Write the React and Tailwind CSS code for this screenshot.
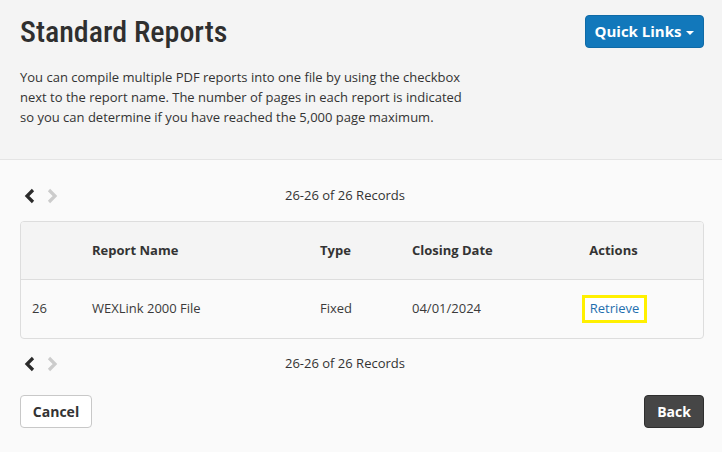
import React from 'react';

const Chevron = ({ dir, className }) => (
  <svg width="14" height="16" viewBox="0 0 14 16" className={className}>
    {dir === 'left' ? (
      <path d="M10 2 L4 8 L10 14" fill="none" stroke="currentColor" strokeWidth="3.2" strokeLinejoin="miter" />
    ) : (
      <path d="M4 2 L10 8 L4 14" fill="none" stroke="currentColor" strokeWidth="3.2" strokeLinejoin="miter" />
    )}
  </svg>
);

const Pager = () => (
  <div className="flex items-center h-[24px] text-[13px] text-[#333]">
    <div className="flex items-center gap-[8px] pl-[3px] w-[200px]">
      <Chevron dir="left" className="text-[#2b2b2b]" />
      <Chevron dir="right" className="text-[#cccccc]" />
    </div>
    <div className="ml-[65px]">26-26 of 26 Records</div>
  </div>
);

const App = () => {
  return (
    <div
      className="w-[722px] h-[452px] bg-[#fafafa] text-[#333]"
      style={{ fontFamily: '"Open Sans", sans-serif' }}
    >
      {/* Header */}
      <div className="bg-[#f4f4f4] border-b border-[#e4e4e4] h-[160px] pl-[20px] pr-[18px] pt-[14px]">
        <div className="flex items-start justify-between">
          <h1
            className="text-[30px] leading-[36px] font-medium text-[#2f2f2f]"
            style={{ fontFamily: '"Roboto Condensed", "Liberation Sans Narrow", "DejaVu Sans Condensed", Roboto, sans-serif' }}
          >
            Standard Reports
          </h1>
          <button className="mt-[1px] h-[33px] w-[119px] bg-[#1278bb] rounded-[4px] text-white text-[15px] font-bold flex items-center justify-center gap-[5px] border border-[#0f6aa6]">
            Quick Links
            <span className="inline-block w-0 h-0 border-l-[4px] border-r-[4px] border-t-[4px] border-l-transparent border-r-transparent border-t-white mt-[2px]" />
          </button>
        </div>
        <p className="mt-[17px] text-[13px] leading-[20px] text-[#333] w-[448px]">
          You can compile multiple PDF reports into one file by using the checkbox next to the report name. The number of pages in each report is indicated so you can determine if you have reached the 5,000 page maximum.
        </p>
      </div>

      {/* Body */}
      <div className="pl-[20px] pr-[18px] pt-[24px]">
        <Pager />

        <div className="mt-[13px] border border-[#dddddd] rounded-[4px] overflow-hidden bg-[#fafafa]">
          <div className="grid grid-cols-[71px_228px_92px_160px_1fr] h-[58px] items-center bg-[#f4f4f4] border-b border-[#dddddd] text-[13px] font-bold text-[#333]">
            <div />
            <div>Report Name</div>
            <div>Type</div>
            <div>Closing Date</div>
            <div className="text-center pr-[48px]">Actions</div>
          </div>
          <div className="grid grid-cols-[71px_228px_92px_160px_1fr] h-[58px] items-center text-[13px] text-[#3a3a3a]">
            <div className="pl-[11px]">26</div>
            <div>WEXLink 2000 File</div>
            <div>Fixed</div>
            <div>04/01/2024</div>
            <div className="flex justify-center pr-[46px]">
              <span className="border-[3px] border-[#fff000] px-[5px] h-[28px] flex items-center text-[#1f6fae] bg-white">
                Retrieve
              </span>
            </div>
          </div>
        </div>

        <div className="mt-[13px]">
          <Pager />
        </div>

        <div className="mt-[19px] flex justify-between">
          <button className="h-[33px] w-[72px] bg-white border border-[#c8c8c8] rounded-[4px] text-[14px] font-bold text-[#333]">
            Cancel
          </button>
          <button className="h-[33px] w-[60px] bg-[#464646] border border-[#2e2e2e] rounded-[4px] text-[14px] font-bold text-white">
            Back
          </button>
        </div>
      </div>
    </div>
  );
};

export default App;
